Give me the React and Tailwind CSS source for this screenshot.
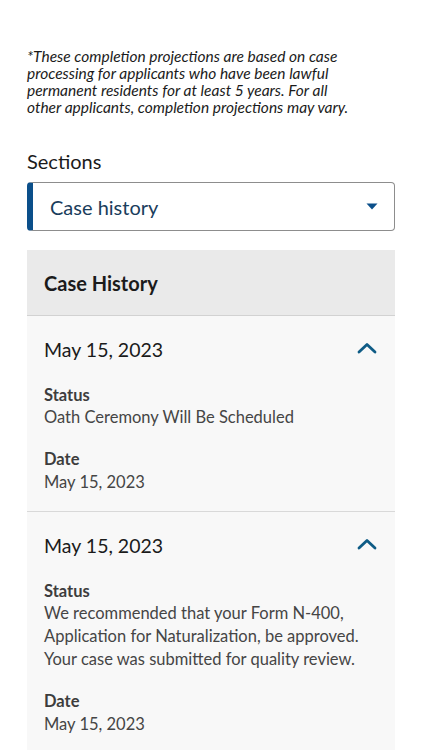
import React from 'react'

const font = { fontFamily: 'Lato, "Noto Sans", sans-serif' }

const entries = [
  {
    date: 'May 15, 2023',
    status: ['Oath Ceremony Will Be Scheduled'],
  },
  {
    date: 'May 15, 2023',
    status: [
      'We recommended that your Form N-400,',
      'Application for Naturalization, be approved.',
      'Your case was submitted for quality review.',
    ],
  },
]

function ChevronUp() {
  return (
    <svg width="22" height="14" viewBox="0 0 22 14" fill="none">
      <path d="M3 11 L11 3.5 L19 11" stroke="#0f5c86" strokeWidth="2.8" strokeLinecap="round" strokeLinejoin="round" />
    </svg>
  )
}

export default function App() {
  return (
    <div className="min-h-screen w-full bg-white px-[27px] pt-[48px]" style={font}>
      {/* Footnote */}
      <p className="max-w-[330px] text-[15.5px] italic leading-[17px] text-[#1b1b1b]">
        *These completion projections are based on case processing for applicants who have been lawful
        permanent residents for at least 5 years. For all other applicants, completion projections may vary.
      </p>

      {/* Sections select */}
      <div className="mt-[33px] text-[20px] leading-6 text-[#1b1b1b]">Sections</div>
      <div className="mt-[9px] flex h-[49px] items-center justify-between rounded-[4px] border border-[#8d8d8d] border-l-[6px] border-l-[#0b4f8a] pl-[17px] pr-[16px]">
        <span className="text-[20px] text-[#1a3d5c]">Case history</span>
        <svg width="12" height="7" viewBox="0 0 12 7">
          <path d="M0.5 0.5 L11.5 0.5 L6 6.5 Z" fill="#0b4f8a" />
        </svg>
      </div>

      {/* Case history panel */}
      <div className="mt-[19px]">
        <div className="flex h-[66px] items-center border-b border-[#d2d2d2] bg-[#eaeaea] px-[17px]">
          <h2 className="text-[20px] font-bold text-[#1b1b1b]">Case History</h2>
        </div>
        {entries.map((e, i) => (
          <div key={i} className="border-b border-[#d9d9d9] bg-[#f8f8f8] px-[17px] pt-[20px] pb-[17px]">
            <div className="flex items-center justify-between">
              <span className="text-[19.5px] leading-7 text-[#1b1b1b]">{e.date}</span>
              <span className="-mt-1">
                <ChevronUp />
              </span>
            </div>
            <div className="mt-[20px] text-[16.5px] font-bold leading-[22px] text-[#3d3d3d]">Status</div>
            <div className="text-[16.5px] leading-[23px] text-[#454545]">
              {e.status.map((l, j) => (
                <div key={j}>{l}</div>
              ))}
            </div>
            <div className="mt-[19px] text-[16.5px] font-bold leading-[22px] text-[#3d3d3d]">Date</div>
            <div className="mt-[1px] text-[16.5px] leading-[23px] text-[#454545]">{e.date}</div>
          </div>
        ))}
      </div>
    </div>
  )
}
